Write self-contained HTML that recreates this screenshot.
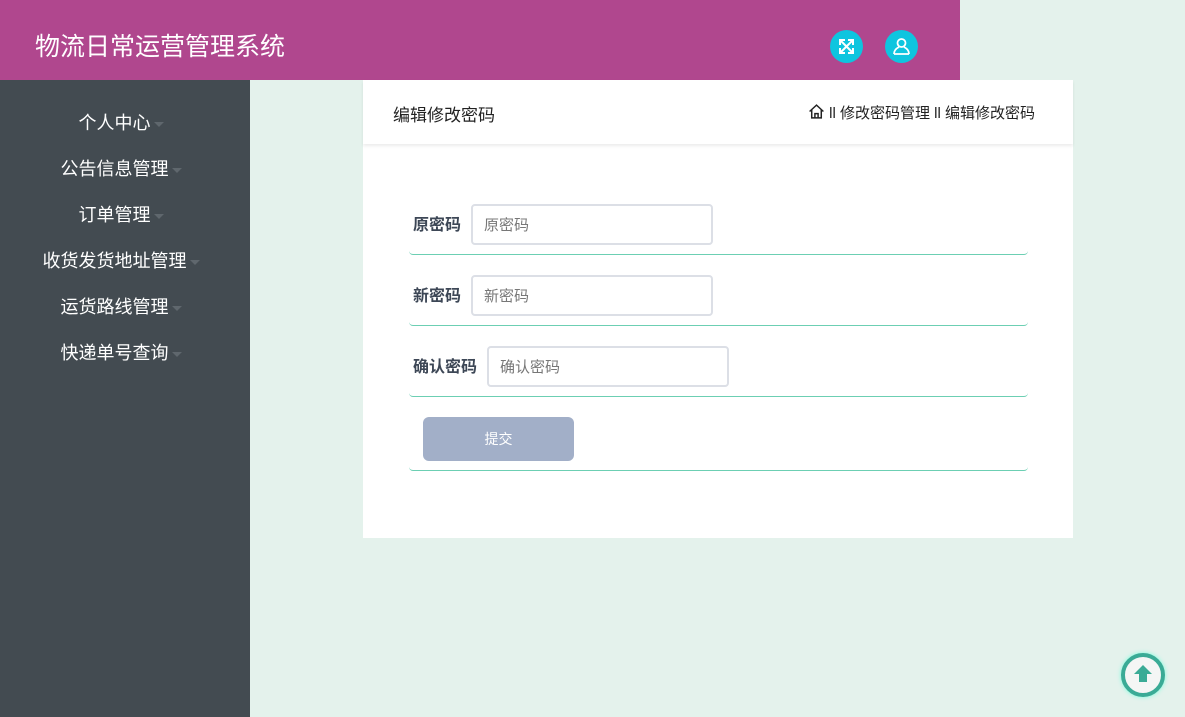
<!DOCTYPE html>
<html><head><meta charset="utf-8"><style>
*{margin:0;padding:0;box-sizing:border-box}
body{width:1185px;height:717px;background:#e4f2ec;font-family:"Liberation Sans","Noto Sans CJK SC",sans-serif;position:relative;overflow:hidden}
.hdr{position:absolute;left:0;top:0;width:960px;height:80px;background:#b0478e}
.title{position:absolute;left:35px;top:30px;font-size:25px;color:#fff;line-height:34px}
.circ{position:absolute;top:30px;width:33px;height:33px;border-radius:50%;background:#0ec5df}
.side{position:absolute;left:0;top:80px;width:250px;height:637px;background:#434b51}
.item{position:absolute;left:0;width:250px;text-align:center;color:#fff;font-size:18px;line-height:24px;padding-right:8px}
.item i{display:inline-block;width:0;height:0;border-left:5px solid transparent;border-right:5px solid transparent;border-top:5px solid #5f676d;vertical-align:middle;margin-left:3px}
.card{position:absolute;left:363px;top:80px;width:710px;height:458px;background:#fff}
.chead{position:absolute;left:0;top:0;width:710px;height:64px;box-shadow:0 2px 3px rgba(0,0,0,.08)}
.ct{position:absolute;left:30px;top:21px;font-size:17px;color:#222}
.bc{position:absolute;left:445px;top:22px;font-size:15px;color:#222}
.lbl{position:absolute;left:50px;font-size:16px;font-weight:bold;color:#3d4756}
.inp{position:absolute;height:41px;border:2px solid #dcdfe6;border-radius:4px;font-size:15px;color:#777;padding-left:11px;line-height:39px}
.line{position:absolute;left:46px;width:619px;height:6px;border-bottom:1px solid #6ccfb3;border-radius:0 0 4px 4px}
.btn{position:absolute;left:60px;top:337px;width:151px;height:44px;background:#a2afc8;border-radius:6px;color:#fff;font-size:14px;text-align:center;line-height:44px}
</style></head><body>
<div class="hdr"><div class="title">物流日常运营管理系统</div>
<div class="circ" style="left:830px"><svg width="33" height="33" viewBox="0 0 33 33" fill="none" stroke="#fff" stroke-width="2"><path d="M11 11l11 11M22 11L11 22M10 15v-5h5M18 10h5v5M23 18v5h-5M15 23h-5v-5"/></svg></div>
<div class="circ" style="left:885px"><svg width="33" height="33" viewBox="0 0 33 33" fill="none" stroke="#fff" stroke-width="1.8"><circle cx="16.5" cy="13" r="4"/><path d="M9 24c0-4 3-6 5-7M24 24c0-4-3-6-5-7M9 24h15"/></svg></div>
</div>
<div class="side">
<div class="item" style="top:31px">个人中心<i></i></div>
<div class="item" style="top:77px">公告信息管理<i></i></div>
<div class="item" style="top:123px">订单管理<i></i></div>
<div class="item" style="top:169px">收货发货地址管理<i></i></div>
<div class="item" style="top:215px">运货路线管理<i></i></div>
<div class="item" style="top:261px">快递单号查询<i></i></div>
</div>
<div class="card">
<div class="chead"><div class="ct">编辑修改密码</div>
<div class="bc"><svg width="17" height="17" viewBox="0 0 16 16" fill="none" stroke="#222" stroke-width="1.4" style="vertical-align:-2px"><path d="M1.5 8L8 2l6.5 6M3.5 6.5V14h9V6.5M6.5 14V10h3v4"/></svg> ll 修改密码管理 ll 编辑修改密码</div></div>
<div class="lbl" style="top:131px">原密码</div><div class="inp" style="left:108px;top:124px;width:242px">原密码</div>
<div class="line" style="top:169px"></div>
<div class="lbl" style="top:202px">新密码</div><div class="inp" style="left:108px;top:195px;width:242px">新密码</div>
<div class="line" style="top:240px"></div>
<div class="lbl" style="top:273px">确认密码</div><div class="inp" style="left:124px;top:266px;width:242px">确认密码</div>
<div class="line" style="top:311px"></div>
<div class="btn">提交</div>
<div class="line" style="top:385px"></div>
</div>
<div style="position:absolute;left:1121px;top:653px;width:44px;height:44px;border-radius:50%;border:4px solid #3aab96;background:#f4f6f5;box-shadow:0 0 4px #7fd"><svg width="36" height="36" viewBox="0 0 36 36"><path d="M18 8l9 9h-5v8h-8v-8H9z" fill="#3aab96"/></svg></div>
</body></html>
